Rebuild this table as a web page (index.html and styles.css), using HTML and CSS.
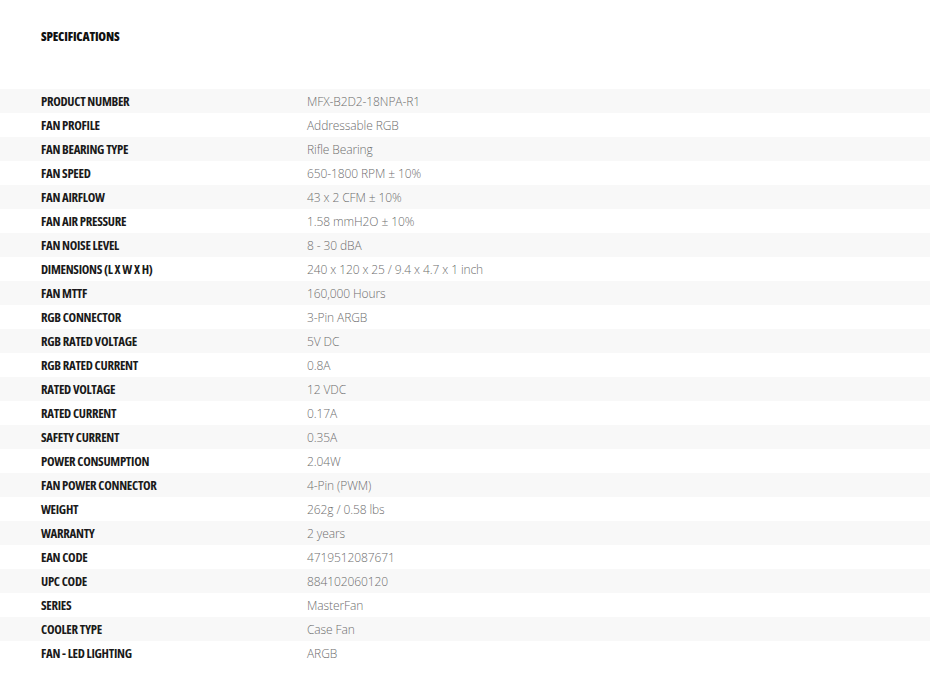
FILE: index.html
```html
<!DOCTYPE html>
<html>
<head>
<meta charset="utf-8">
<link rel="stylesheet" href="styles.css">
</head>
<body>
<section class="specs">
  <h2 class="specs-title">SPECIFICATIONS</h2>
  <div class="specs-table">
    <div class="row"><div class="label">PRODUCT NUMBER</div><div class="value">MFX-B2D2-18NPA-R1</div></div>
    <div class="row"><div class="label">FAN PROFILE</div><div class="value">Addressable RGB</div></div>
    <div class="row"><div class="label">FAN BEARING TYPE</div><div class="value">Rifle Bearing</div></div>
    <div class="row"><div class="label">FAN SPEED</div><div class="value">650-1800 RPM ± 10%</div></div>
    <div class="row"><div class="label">FAN AIRFLOW</div><div class="value">43 x 2 CFM ± 10%</div></div>
    <div class="row"><div class="label">FAN AIR PRESSURE</div><div class="value">1.58 mmH2O ± 10%</div></div>
    <div class="row"><div class="label">FAN NOISE LEVEL</div><div class="value">8 - 30 dBA</div></div>
    <div class="row"><div class="label">DIMENSIONS (L X W X H)</div><div class="value">240 x 120 x 25 / 9.4 x 4.7 x 1 inch</div></div>
    <div class="row"><div class="label">FAN MTTF</div><div class="value">160,000 Hours</div></div>
    <div class="row"><div class="label">RGB CONNECTOR</div><div class="value">3-Pin ARGB</div></div>
    <div class="row"><div class="label">RGB RATED VOLTAGE</div><div class="value">5V DC</div></div>
    <div class="row"><div class="label">RGB RATED CURRENT</div><div class="value">0.8A</div></div>
    <div class="row"><div class="label">RATED VOLTAGE</div><div class="value">12 VDC</div></div>
    <div class="row"><div class="label">RATED CURRENT</div><div class="value">0.17A</div></div>
    <div class="row"><div class="label">SAFETY CURRENT</div><div class="value">0.35A</div></div>
    <div class="row"><div class="label">POWER CONSUMPTION</div><div class="value">2.04W</div></div>
    <div class="row"><div class="label">FAN POWER CONNECTOR</div><div class="value">4-Pin (PWM)</div></div>
    <div class="row"><div class="label">WEIGHT</div><div class="value">262g / 0.58 lbs</div></div>
    <div class="row"><div class="label">WARRANTY</div><div class="value">2 years</div></div>
    <div class="row"><div class="label">EAN CODE</div><div class="value">4719512087671</div></div>
    <div class="row"><div class="label">UPC CODE</div><div class="value">884102060120</div></div>
    <div class="row"><div class="label">SERIES</div><div class="value">MasterFan</div></div>
    <div class="row"><div class="label">COOLER TYPE</div><div class="value">Case Fan</div></div>
    <div class="row"><div class="label">FAN - LED LIGHTING</div><div class="value">ARGB</div></div>
  </div>
</section>
</body>
</html>
```

FILE: styles.css
```css
html, body {
  margin: 0;
  padding: 0;
  background: #ffffff;
}

.specs {
  padding-top: 28px;
}

.specs-title {
  margin: 0 0 0 41px;
  height: 61px;
  font-family: "Open Sans", sans-serif;
  font-stretch: 75%;
  font-weight: 800;
  font-size: 12.5px;
  line-height: 18px;
  letter-spacing: -0.2px;
  color: #111;
}

.specs-table {
  display: flex;
  flex-direction: column;
}

.row {
  display: flex;
  align-items: center;
  height: 24px;
  padding-left: 41px;
}

.row:nth-child(odd) {
  background: #f8f8f8;
}

.label {
  width: 266px;
  flex: none;
  font-family: "Open Sans", sans-serif;
  font-stretch: 75%;
  font-weight: 700;
  font-size: 12.8px;
  letter-spacing: -0.3px;
  color: #1a1a1a;
}

.value {
  font-family: "Open Sans", sans-serif;
  font-weight: 300;
  font-size: 12px;
  letter-spacing: -0.1px;
  color: #6e6e6e;
}
```
